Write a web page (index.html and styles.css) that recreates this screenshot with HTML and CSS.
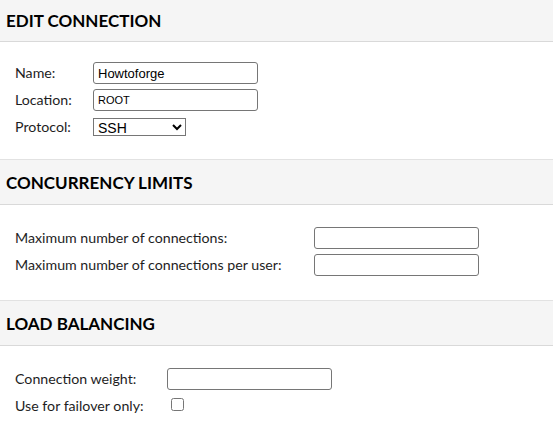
FILE: index.html
```html
<!DOCTYPE html>
<html>
<head>
<meta charset="utf-8">
<link rel="stylesheet" href="styles.css">
</head>
<body>
<div class="page">
  <div class="header header-first"><h2>Edit Connection</h2></div>
  <div class="section-body section-first">
    <div class="form form-conn">
      <label class="lbl">Name:</label>
      <div class="field"><input class="txt" type="text" value="Howtoforge"></div>
      <label class="lbl">Location:</label>
      <div class="field"><input class="txt txt-small" type="text" value="ROOT"></div>
      <label class="lbl lbl-sel">Protocol:</label>
      <div class="field field-sel"><select class="sel"><option>SSH</option></select></div>
    </div>
  </div>

  <div class="header"><h2>Concurrency Limits</h2></div>
  <div class="section-body">
    <div class="form form-limits">
      <label class="lbl">Maximum number of connections:</label>
      <div class="field"><input class="txt" type="text"></div>
      <label class="lbl">Maximum number of connections per user:</label>
      <div class="field"><input class="txt" type="text"></div>
    </div>
  </div>

  <div class="header"><h2>Load Balancing</h2></div>
  <div class="section-body">
    <div class="form form-balance">
      <label class="lbl">Connection weight:</label>
      <div class="field"><input class="txt" type="text"></div>
      <label class="lbl">Use for failover only:</label>
      <div class="field field-chk"><input class="chk" type="checkbox"></div>
    </div>
  </div>
</div>
</body>
</html>
```
FILE: styles.css
```css
html, body {
  margin: 0;
  padding: 0;
  background: #ffffff;
}
body {
  font-family: Lato, "Open Sans", sans-serif;
  color: #1a1a1a;
  width: 553px;
  overflow: hidden;
}
.page {
  display: flex;
  flex-direction: column;
}
.header {
  background: #f5f5f5;
  border-top: 1px solid #e2e2e2;
  border-bottom: 1px solid #d9d9d9;
  height: 44px;
  display: flex;
  align-items: center;
}
.header-first {
  border-top: none;
  height: 41px;
}
.header h2 {
  margin: 0;
  padding-left: 6px;
  font-size: 17px;
  font-weight: 700;
  text-transform: uppercase;
  color: #000;
}
.section-body {
  padding: 22px 0 24px 15px;
}
.section-first {
  padding-top: 20px;
  padding-bottom: 23px;
}
.form {
  display: grid;
  row-gap: 5px;
  align-items: center;
}
.form-conn { grid-template-columns: 78px auto; }
.form-limits { grid-template-columns: 299px auto; }
.form-balance { grid-template-columns: 152px auto; }
.lbl {
  font-size: 14.2px;
  color: #1e1e1e;
  line-height: 22px;
}
.lbl-sel {
  line-height: 18px;
  padding-top: 2px;
}
.field {
  display: flex;
  align-items: center;
  height: 22px;
}
.field-sel {
  height: 20px;
  align-items: flex-end;
}
.field-chk {
  height: 22px;
  align-items: flex-start;
}
.txt {
  box-sizing: border-box;
  width: 165px;
  height: 22px;
  margin: 0;
  padding: 1px 4px;
  border: 1px solid #767676;
  border-radius: 3px;
  font-family: Arial, "Liberation Sans", sans-serif;
  font-size: 13px;
  color: #000;
}
.txt-small {
  font-size: 11px;
}
.sel {
  box-sizing: border-box;
  width: 93px;
  height: 18px;
  margin: 0;
  font-family: Arial, "Liberation Sans", sans-serif;
  font-size: 14px;
  color: #000;
  border: 1px solid #767676;
  border-radius: 0;
  background: #fff;
}
.chk {
  width: 13px;
  height: 13px;
  margin: 3px 0 0 4px;
}
```
